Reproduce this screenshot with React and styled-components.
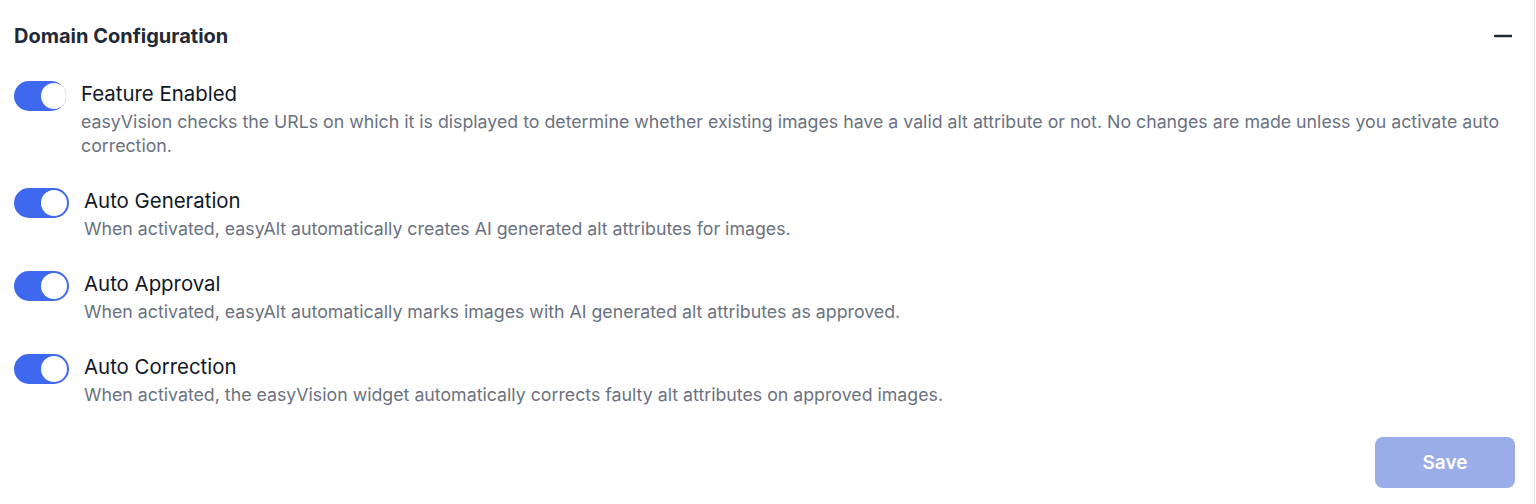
import React, { useState } from 'react';
import styled, { createGlobalStyle } from 'styled-components';

const GlobalStyle = createGlobalStyle`
  body {
    margin: 0;
    background: #ffffff;
    font-family: 'Inter', 'Noto Sans', sans-serif;
  }
`;

const settingsList = [
  {
    key: 'enabled',
    title: 'Feature Enabled',
    text: 'easyVision checks the URLs on which it is displayed to determine whether existing images have a valid alt attribute or not. No changes are made unless you activate auto correction.',
    trackWidth: 52,
  },
  {
    key: 'generation',
    title: 'Auto Generation',
    text: 'When activated, easyAlt automatically creates AI generated alt attributes for images.',
  },
  {
    key: 'approval',
    title: 'Auto Approval',
    text: 'When activated, easyAlt automatically marks images with AI generated alt attributes as approved.',
  },
  {
    key: 'correction',
    title: 'Auto Correction',
    text: 'When activated, the easyVision widget automatically corrects faulty alt attributes on approved images.',
  },
];

const DomainConfiguration = () => {
  const [values, setValues] = useState({
    enabled: true,
    generation: true,
    approval: true,
    correction: true,
  });

  const toggle = (key) => {
    setValues((prev) => ({ ...prev, [key]: !prev[key] }));
  };

  return (
    <Panel>
      <Header>
        <Title>Domain Configuration</Title>
        <CollapseButton type="button" aria-label="Collapse">
          <svg width="18" height="4" viewBox="0 0 18 4">
            <line x1="1" y1="2" x2="17" y2="2" stroke="#1f2937" strokeWidth="2.6" strokeLinecap="round" />
          </svg>
        </CollapseButton>
      </Header>

      <List>
        {settingsList.map((item) => (
          <Row key={item.key}>
            <Switch
              type="button"
              $on={values[item.key]}
              $width={item.trackWidth || 55}
              onClick={() => toggle(item.key)}
              aria-pressed={values[item.key]}
            >
              <Knob $on={values[item.key]} />
            </Switch>
            <Text>
              <RowTitle>{item.title}</RowTitle>
              <RowText>{item.text}</RowText>
            </Text>
          </Row>
        ))}
      </List>

      <Footer>
        <SaveButton type="button" disabled>
          Save
        </SaveButton>
      </Footer>
    </Panel>
  );
};

const Panel = styled.div`
  box-sizing: border-box;
  width: calc(100% - 1px);
  min-height: 504px;
  padding: 0 19px 0 14px;
  border-right: 1px solid #e5e7eb;
  background: #fff;
`;

const Header = styled.div`
  display: flex;
  justify-content: space-between;
  align-items: center;
  height: 72px;
`;

const Title = styled.h2`
  margin: 0;
  font-size: 20px;
  font-weight: 700;
  color: #1f2937;
`;

const CollapseButton = styled.button`
  display: flex;
  align-items: center;
  padding: 0;
  margin-right: 3px;
  border: none;
  background: none;
  cursor: pointer;
`;

const List = styled.div`
  display: flex;
  flex-direction: column;
  gap: 29px;
  padding-top: 8px;
`;

const Row = styled.div`
  display: flex;
  align-items: flex-start;
  gap: 15px;
`;

const Switch = styled.button`
  position: relative;
  flex-shrink: 0;
  width: ${(props) => props.$width}px;
  height: 30px;
  margin-top: 1px;
  padding: 0;
  border: none;
  border-radius: 15px;
  overflow: hidden;
  background-color: ${(props) => (props.$on ? '#3e68ee' : '#d1d5db')};
  cursor: pointer;
`;

const Knob = styled.span`
  position: absolute;
  top: 2px;
  left: ${(props) => (props.$on ? '27px' : '2px')};
  width: 26px;
  height: 26px;
  border-radius: 50%;
  background: #fff;
`;

const Text = styled.div`
  display: flex;
  flex-direction: column;
  gap: 2px;
`;

const RowTitle = styled.div`
  font-size: 20.4px;
  line-height: 28px;
  color: #111827;
`;

const RowText = styled.div`
  font-size: 17.75px;
  line-height: 24px;
  color: #6b7280;
`;

const Footer = styled.div`
  display: flex;
  justify-content: flex-end;
  padding-top: 30px;
`;

const SaveButton = styled.button`
  width: 140px;
  height: 51px;
  border: none;
  border-radius: 8px;
  background-color: #9aade9;
  color: #fff;
  font-family: 'Inter', sans-serif;
  font-size: 19px;
  font-weight: 600;
  cursor: not-allowed;
`;

export default function App() {
  return (
    <>
      <GlobalStyle />
      <DomainConfiguration />
    </>
  );
}
